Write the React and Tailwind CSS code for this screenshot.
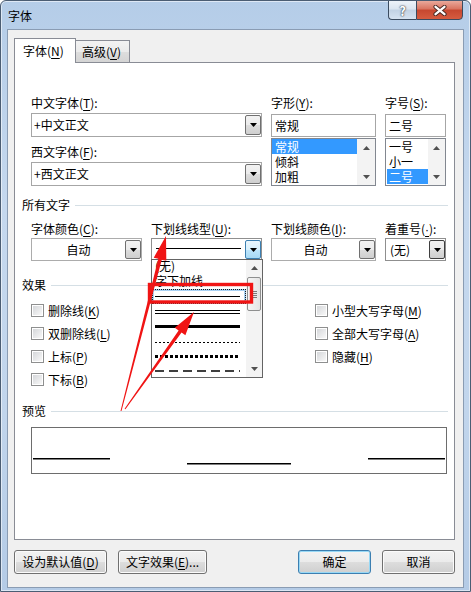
import React from "react";

const U = ({ children, className = "" }) => (
  <span className={`underline decoration-1 underline-offset-[2px] ${className}`}>{children}</span>
);

const Label = ({ children, className = "" }) => (
  <div className={`h-[16px] leading-[16px] whitespace-nowrap ${className}`}>{children}</div>
);

function Tri({ up = false, color = "#000" }) {
  return (
    <svg width="7" height="4" viewBox="0 0 7 4" className="block">
      <path d={up ? "M3.5 0L7 4H0Z" : "M0 0H7L3.5 4Z"} fill={color} />
    </svg>
  );
}

function DropBtn({ variant = "normal", className = "" }) {
  const v =
    variant === "focus"
      ? "border-[#3c7fb1] bg-[linear-gradient(#eaf6fd,#d9f0fc_50%,#bee6fd_50%,#a7d9f5)]"
      : variant === "dark"
      ? "border-[#3f3f3f] bg-[linear-gradient(#f2f2f2,#ebebeb_50%,#dddddd_50%,#cfcfcf)]"
      : "border-[#707070] bg-[linear-gradient(#f2f2f2,#ebebeb_50%,#dddddd_50%,#cfcfcf)]";
  return (
    <div className={`w-[16px] shrink-0 rounded-[2px] border flex items-center justify-center ${v} ${className}`}>
      <Tri />
    </div>
  );
}

function ListScroll({ className = "" }) {
  return (
    <div className={`shrink-0 bg-[#f3f3f3] flex flex-col justify-between ${className}`}>
      <div className="h-[17px] flex items-center justify-center">
        <Tri up color="#505050" />
      </div>
      <div className="h-[17px] flex items-center justify-center">
        <Tri color="#505050" />
      </div>
    </div>
  );
}

function EditCombo({ text }) {
  return (
    <div className="h-[24px] border border-[#a6a6a6] bg-white flex">
      <div className="flex-1 pl-[2px] leading-[22px] whitespace-nowrap">{text}</div>
      <DropBtn className="my-[1px]" />
    </div>
  );
}

function Check({ children }) {
  return (
    <div className="h-[23px] flex items-center gap-[4px]">
      <div className="w-[13px] h-[13px] border border-[#8e8f8f] bg-white p-px">
        <div className="w-full h-full bg-[linear-gradient(135deg,#d5d7da,#f8f8f8)]" />
      </div>
      <span className="leading-[16px] whitespace-nowrap">{children}</span>
    </div>
  );
}

function GroupHeader({ children, className = "" }) {
  return (
    <div className={`ml-[7px] mr-[6px] h-[16px] flex items-center ${className}`}>
      <span className="leading-[16px] whitespace-nowrap">{children}</span>
      <div className="flex-1 h-px bg-[#d5dfe5] ml-[5px]" />
    </div>
  );
}

function Button({ children, className = "", def = false }) {
  return (
    <div
      className={`h-[24px] rounded-[3px] border flex items-center justify-center whitespace-nowrap bg-[linear-gradient(#f2f2f2,#ebebeb_50%,#dddddd_50%,#cfcfcf)] ${
        def
          ? "border-[#3c7fb1] shadow-[inset_0_0_0_1px_#98d8f5]"
          : "border-[#707070] shadow-[inset_0_0_0_1px_#fbfbfb]"
      } ${className}`}
    >
      {children}
    </div>
  );
}

function arrowPts(x0, y0, x1, y1, hl = 24, hw = 6.5, w0 = 1, w1 = 3.6) {
  const dx = x1 - x0,
    dy = y1 - y0,
    L = Math.hypot(dx, dy);
  const ux = dx / L,
    uy = dy / L;
  const nx = -uy,
    ny = ux;
  const bx = x1 - ux * hl,
    by = y1 - uy * hl;
  const pts = [
    [x0 + (nx * w0) / 2, y0 + (ny * w0) / 2],
    [bx + (nx * w1) / 2, by + (ny * w1) / 2],
    [bx + nx * hw, by + ny * hw],
    [x1, y1],
    [bx - nx * hw, by - ny * hw],
    [bx - (nx * w1) / 2, by - (ny * w1) / 2],
    [x0 - (nx * w0) / 2, y0 - (ny * w0) / 2],
  ];
  return pts.map((p) => p.map((v) => v.toFixed(2)).join(",")).join(" ");
}

function Sample({ kind }) {
  return (
    <svg width="85" height="15" viewBox="0 0 85 15" className="block">
      {kind === "single" && <rect x="0" y="7" width="85" height="1" fill="#000" />}
      {kind === "double" && (
        <>
          <rect x="0" y="6" width="85" height="1" fill="#000" />
          <rect x="0" y="9" width="85" height="1" fill="#000" />
        </>
      )}
      {kind === "thick" && <rect x="0" y="6" width="85" height="3" fill="#000" />}
      {kind === "dotted" && (
        <line x1="0" x2="85" y1="8.5" y2="8.5" stroke="#000" strokeWidth="1" strokeDasharray="2 2" />
      )}
      {kind === "heavydot" && (
        <line x1="0" x2="85" y1="7.5" y2="7.5" stroke="#000" strokeWidth="3" strokeDasharray="3 2" />
      )}
      {kind === "dashed" && (
        <line x1="0" x2="85" y1="7" y2="7" stroke="#000" strokeWidth="1.6" strokeDasharray="9 5" />
      )}
    </svg>
  );
}

export default function App() {
  return (
    <div className="w-[471px] h-[592px] relative flex flex-col overflow-hidden rounded-t-[6px] border border-[#4b5d73] bg-[linear-gradient(180deg,#b5cde8_0%,#c5d8ee_35%,#c1d5ec_70%,#b4cbe6_100%)] text-[12px] text-black font-['Noto_Sans_CJK_SC',sans-serif] shadow-[inset_0_0_0_1px_rgba(255,255,255,0.55)]">
      {/* title bar */}
      <div className="h-[28px] shrink-0 flex items-start justify-between pl-[7px] pr-[7px]">
        <div className="self-center leading-[16px] mt-[1px]">字体</div>
        <div className="flex -mt-[1px] h-[20px]">
          <div className="w-[28px] h-full border border-[#3b4b5f] border-r-0 rounded-bl-[4px] bg-[linear-gradient(180deg,#eef3f9,#dbe5f0_45%,#c2d2e4_50%,#d6e3f1)] flex items-center justify-center text-white font-bold text-[13px] leading-none [text-shadow:0_0_2px_#2b3440,0_0_1px_#2b3440]">
            ?
          </div>
          <div className="w-[47px] h-full border border-[#3b4b5f] rounded-br-[4px] bg-[linear-gradient(180deg,#eaa99b,#d9735f_45%,#c7472f_50%,#d65c40)] flex items-center justify-center">
            <svg width="14" height="11" viewBox="0 0 14 11">
              <path d="M2.5 1.8L11.5 9.2M11.5 1.8L2.5 9.2" stroke="#4a2a24" strokeWidth="4.2" strokeLinecap="round" />
              <path d="M2.5 1.8L11.5 9.2M11.5 1.8L2.5 9.2" stroke="#fff" strokeWidth="2.3" strokeLinecap="round" />
            </svg>
          </div>
        </div>
      </div>

      {/* client */}
      <div className="flex-1 mx-[6px] mb-[3px] border border-[#8a9cb3] bg-[#f0f0f0] flex flex-col">
        {/* tabs */}
        <div className="ml-[6px] mt-[8px] h-[25px] mb-[-1px] flex items-end relative z-10">
          <div className="w-[62px] h-[25px] border border-b-0 border-[#898c95] bg-white pl-[8px] leading-[24px] whitespace-nowrap">
            字体(<U>N</U>)
          </div>
          <div className="w-[54px] h-[22px] mb-[1px] border border-l-0 border-b-0 border-[#898c95] bg-[linear-gradient(#f3f3f3,#ebebeb_50%,#dedede_50%,#d4d4d4)] pl-[6px] leading-[21px] whitespace-nowrap">
            高级(<U>V</U>)
          </div>
        </div>

        {/* panel */}
        <div className="ml-[6px] w-[441px] h-[478px] border border-[#898c95] bg-white flex flex-col">
          {/* fonts */}
          <div className="pt-[32px] pl-[16px] flex gap-[9px]">
            <div className="w-[231px]">
              <Label>
                中文字体(<U>T</U>):
              </Label>
              <div className="mt-[2px]">
                <EditCombo text="+中文正文" />
              </div>
              <Label className="mt-[7px]">
                西文字体(<U>F</U>):
              </Label>
              <div className="mt-[2px]">
                <EditCombo text="+西文正文" />
              </div>
            </div>
            <div className="w-[105px]">
              <Label>
                字形(<U>Y</U>):
              </Label>
              <div className="mt-[3px] h-[23px] border border-[#a6a6a6] bg-white pl-[3px] leading-[21px]">常规</div>
              <div className="mt-[1px] h-[48px] border border-[#828790] bg-white flex">
                <div className="flex-1">
                  <div className="h-[15px] leading-[15px] pl-[3px] overflow-hidden bg-[#3399ff] text-white">常规</div>
                  <div className="h-[15px] leading-[15px] pl-[3px] overflow-hidden">倾斜</div>
                  <div className="h-[15px] leading-[15px] pl-[3px] overflow-hidden">加粗</div>
                </div>
                <ListScroll className="w-[18px]" />
              </div>
            </div>
            <div className="w-[61px]">
              <Label>
                字号(<U>S</U>):
              </Label>
              <div className="mt-[3px] h-[23px] border border-[#a6a6a6] bg-white pl-[3px] leading-[21px]">二号</div>
              <div className="mt-[1px] h-[48px] border border-[#828790] bg-white flex">
                <div className="flex-1 pl-px">
                  <div className="h-[15px] leading-[15px] pl-[2px] overflow-hidden">一号</div>
                  <div className="h-[15px] leading-[15px] pl-[2px] overflow-hidden">小一</div>
                  <div className="h-[15px] leading-[15px] pl-[2px] overflow-hidden bg-[#3399ff] text-white">二号</div>
                </div>
                <ListScroll className="w-[17px]" />
              </div>
            </div>
          </div>

          {/* 所有文字 */}
          <GroupHeader className="mt-[11px]">所有文字</GroupHeader>
          <div className="mt-[8px] pl-[16px] flex gap-[9px]">
            <div className="w-[111px]">
              <Label>
                字体颜色(<U>C</U>):
              </Label>
              <div className="mt-[1px] h-[23px] border border-[#acacac] bg-white flex">
                <div className="flex-1 text-center leading-[21px]">自动</div>
                <DropBtn className="my-[1px]" />
              </div>
            </div>
            <div className="w-[111px] relative">
              <Label>
                下划线线型(<U>U</U>):
              </Label>
              <div className="mt-[1px] h-[23px] border border-[#8f8f8f] bg-white flex">
                <div className="flex-1 pl-[4px]">
                  <svg width="85" height="21" viewBox="0 0 85 21" className="block">
                    <rect x="0" y="9" width="85" height="1" fill="#000" />
                  </svg>
                </div>
                <DropBtn variant="focus" className="my-[1px]" />
              </div>
              {/* open dropdown list */}
              <div className="absolute left-0 top-[38px] w-[112px] h-[119px] border border-[#646464] bg-white flex z-20">
                <div className="flex-1 overflow-hidden">
                  <div className="-mt-[1px]">
                    <div className="h-[15px] leading-[14px] pl-[3px] whitespace-nowrap">(无)</div>
                    <div className="h-[15px] leading-[14px] pl-[3px] whitespace-nowrap">字下加线</div>
                    <div className="h-[15px] pl-[3px] outline-1 outline-dotted outline-[#1a1a1a] -outline-offset-1 shadow-[inset_0_0_0_2px_#a9d1f3]">
                      <Sample kind="single" />
                    </div>
                    <div className="h-[15px] pl-[3px]">
                      <Sample kind="double" />
                    </div>
                    <div className="h-[15px] pl-[3px]">
                      <Sample kind="thick" />
                    </div>
                    <div className="h-[15px] pl-[3px]">
                      <Sample kind="dotted" />
                    </div>
                    <div className="h-[15px] pl-[3px]">
                      <Sample kind="heavydot" />
                    </div>
                    <div className="h-[15px] pl-[3px]">
                      <Sample kind="dashed" />
                    </div>
                  </div>
                </div>
                <div className="w-[16px] shrink-0 bg-[#f3f3f3] flex flex-col">
                  <div className="h-[16px] flex items-center justify-center">
                    <Tri up color="#505050" />
                  </div>
                  <div className="mt-[1px] h-[34px] mx-px rounded-[2px] border border-[#8e8f8f] bg-[linear-gradient(90deg,#f5f5f5,#e4e4e4)] flex flex-col items-center justify-center gap-px">
                    <div className="w-[6px] h-px bg-[#7a7a7a]" />
                    <div className="w-[6px] h-px bg-[#7a7a7a]" />
                    <div className="w-[6px] h-px bg-[#7a7a7a]" />
                    <div className="w-[6px] h-px bg-[#7a7a7a]" />
                  </div>
                  <div className="flex-1" />
                  <div className="h-[16px] flex items-center justify-center">
                    <Tri color="#505050" />
                  </div>
                </div>
              </div>
            </div>
            <div className="w-[105px]">
              <Label>
                下划线颜色(<U>I</U>):
              </Label>
              <div className="mt-[1px] h-[23px] border border-[#acacac] bg-white flex">
                <div className="flex-1 text-center leading-[21px]">自动</div>
                <DropBtn className="my-[1px]" />
              </div>
            </div>
            <div className="w-[61px]">
              <Label>
                着重号(<U className="font-['Liberation_Sans',sans-serif]">·</U>):
              </Label>
              <div className="mt-[1px] h-[23px] border border-[#8f8f8f] bg-white flex">
                <div className="flex-1 pl-[4px] leading-[21px] whitespace-nowrap">(无)</div>
                <DropBtn variant="dark" className="my-[1px]" />
              </div>
            </div>
          </div>

          {/* 效果 */}
          <GroupHeader className="mt-[16px]">效果</GroupHeader>
          <div className="mt-[6px] pl-[16px] flex">
            <div className="w-[284px] flex flex-col">
              <Check>
                删除线(<U>K</U>)
              </Check>
              <Check>
                双删除线(<U>L</U>)
              </Check>
              <Check>
                上标(<U>P</U>)
              </Check>
              <Check>
                下标(<U>B</U>)
              </Check>
            </div>
            <div className="flex flex-col">
              <Check>
                小型大写字母(<U>M</U>)
              </Check>
              <Check>
                全部大写字母(<U>A</U>)
              </Check>
              <Check>
                隐藏(<U>H</U>)
              </Check>
            </div>
          </div>

          {/* 预览 */}
          <GroupHeader className="mt-[12px]">预览</GroupHeader>
          <div className="mt-[8px] ml-[16px] w-[416px] h-[47px] border border-[#6d6d6d] bg-white">
            <svg width="414" height="45" viewBox="0 0 414 45" className="block">
              <rect x="1" y="30" width="77" height="1.5" fill="#000" />
              <rect x="155" y="35" width="104" height="1.5" fill="#000" />
              <rect x="336" y="30" width="77" height="1.5" fill="#000" />
            </svg>
          </div>
        </div>

        {/* buttons */}
        <div className="mt-[10px] ml-[6px] mr-[8px] flex">
          <Button className="w-[93px]">
            设为默认值(<U>D</U>)
          </Button>
          <Button className="w-[89px] ml-[11px]">
            文字效果(<U>E</U>)...
          </Button>
          <Button def className="w-[73px] ml-auto">
            确定
          </Button>
          <Button className="w-[73px] ml-[11px]">取消</Button>
        </div>
      </div>

      {/* red annotations overlay */}
      <svg
        className="absolute left-[-1px] top-[-1px] w-[471px] h-[592px] pointer-events-none z-50"
        width="471"
        height="592"
        viewBox="0 0 471 592"
      >
        <rect x="149.5" y="284.5" width="102" height="17.5" fill="none" stroke="#f01414" strokeWidth="3.4" />
        <polygon points={arrowPts(121, 411, 166, 236)} fill="#f01414" />
        <polygon points={arrowPts(125, 409, 194, 312)} fill="#f01414" />
      </svg>
    </div>
  );
}
